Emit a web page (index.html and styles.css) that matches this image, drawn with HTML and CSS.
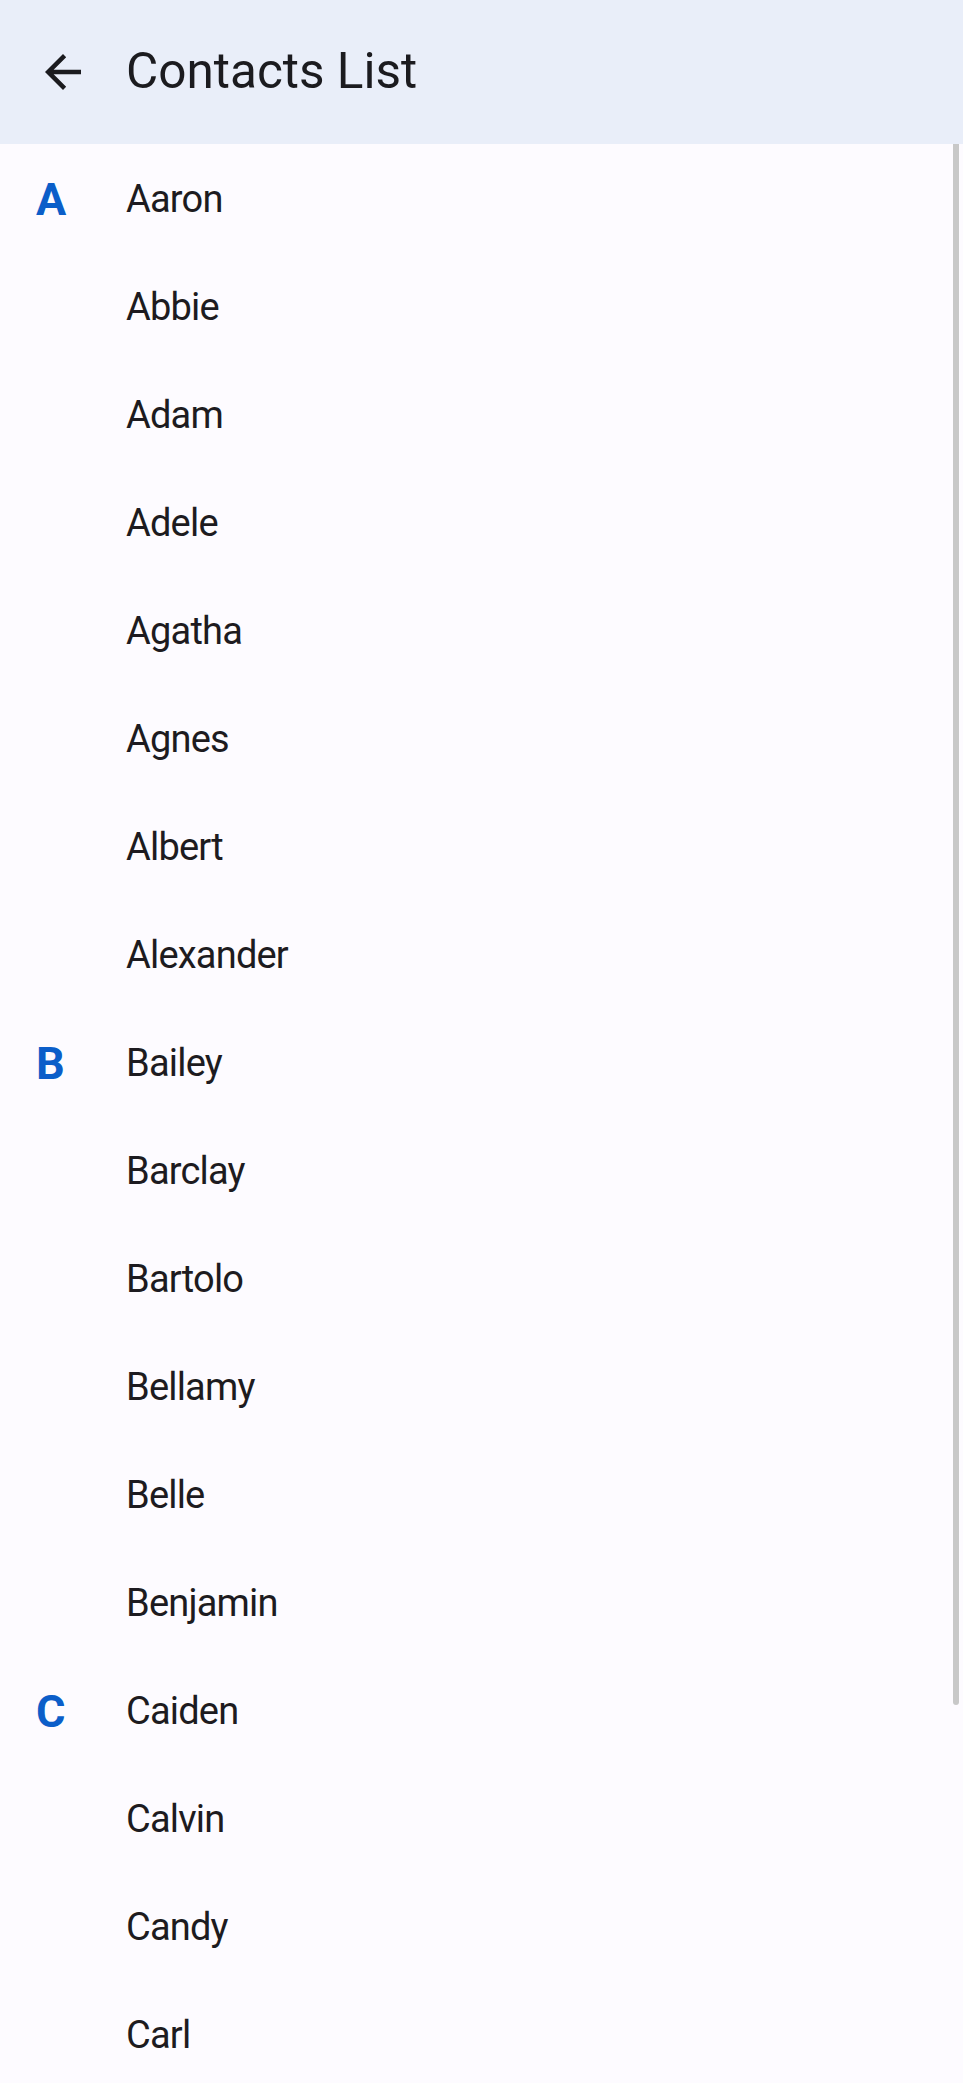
FILE: index.html
```html
<!DOCTYPE html>
<html lang="en">
<head>
<meta charset="utf-8">
<title>Contacts List</title>
<link rel="stylesheet" href="styles.css">
</head>
<body>
<div class="app">
  <header class="topbar">
    <button class="back" aria-label="Back">
      <svg viewBox="0 0 24 24" width="54" height="54"><path d="M20 11H7.83l5.59-5.59L12 4l-8 8 8 8 1.41-1.41L7.83 13H20v-2z" fill="#1b1b1f"/></svg>
    </button>
    <h1 class="title">Contacts List</h1>
  </header>
  <main class="list">
    <div class="row"><span class="letter">A</span><span class="name">Aaron</span></div>
    <div class="row"><span class="letter"></span><span class="name">Abbie</span></div>
    <div class="row"><span class="letter"></span><span class="name">Adam</span></div>
    <div class="row"><span class="letter"></span><span class="name">Adele</span></div>
    <div class="row"><span class="letter"></span><span class="name">Agatha</span></div>
    <div class="row"><span class="letter"></span><span class="name">Agnes</span></div>
    <div class="row"><span class="letter"></span><span class="name">Albert</span></div>
    <div class="row"><span class="letter"></span><span class="name">Alexander</span></div>
    <div class="row"><span class="letter">B</span><span class="name">Bailey</span></div>
    <div class="row"><span class="letter"></span><span class="name">Barclay</span></div>
    <div class="row"><span class="letter"></span><span class="name">Bartolo</span></div>
    <div class="row"><span class="letter"></span><span class="name">Bellamy</span></div>
    <div class="row"><span class="letter"></span><span class="name">Belle</span></div>
    <div class="row"><span class="letter"></span><span class="name">Benjamin</span></div>
    <div class="row"><span class="letter">C</span><span class="name">Caiden</span></div>
    <div class="row"><span class="letter"></span><span class="name">Calvin</span></div>
    <div class="row"><span class="letter"></span><span class="name">Candy</span></div>
    <div class="row"><span class="letter"></span><span class="name">Carl</span></div>
    <div class="scrollbar"></div>
  </main>
</div>
</body>
</html>
```
FILE: styles.css
```css
html, body {
  margin: 0;
  padding: 0;
  background: #fdfbff;
}
body {
  font-family: Roboto, "Noto Sans", sans-serif;
  color: #1b1b1f;
}
.app {
  width: 963px;
  height: 2083px;
  overflow: hidden;
  display: flex;
  flex-direction: column;
}
.topbar {
  flex: 0 0 144px;
  height: 144px;
  background: #e9eef9;
  display: flex;
  align-items: center;
  padding-left: 36px;
  box-sizing: border-box;
}
.back {
  width: 54px;
  height: 54px;
  padding: 0;
  border: 0;
  background: none;
  display: flex;
}
.title {
  margin: 0 0 0 36px;
  font-size: 49.5px;
  font-weight: 400;
  line-height: 1;
  letter-spacing: 0;
}
.list {
  position: relative;
  flex: 1;
  overflow: hidden;
}
.row {
  height: 108px;
  display: flex;
  align-items: center;
  padding-left: 36px;
}
.letter {
  width: 90px;
  flex: 0 0 90px;
  color: #0b5ec9;
  font-weight: 700;
  font-size: 45px;
  line-height: 1;
  padding-top: 2px;
}
.name {
  font-size: 38px;
  line-height: 1;
  letter-spacing: -0.8px;
  padding-top: 2px;
  color: #1d1b20;
}
.scrollbar {
  position: absolute;
  top: 0;
  left: 953px;
  width: 6px;
  height: 1561px;
  background: #c8c8c8;
  border-radius: 0 0 3px 3px;
}
```
